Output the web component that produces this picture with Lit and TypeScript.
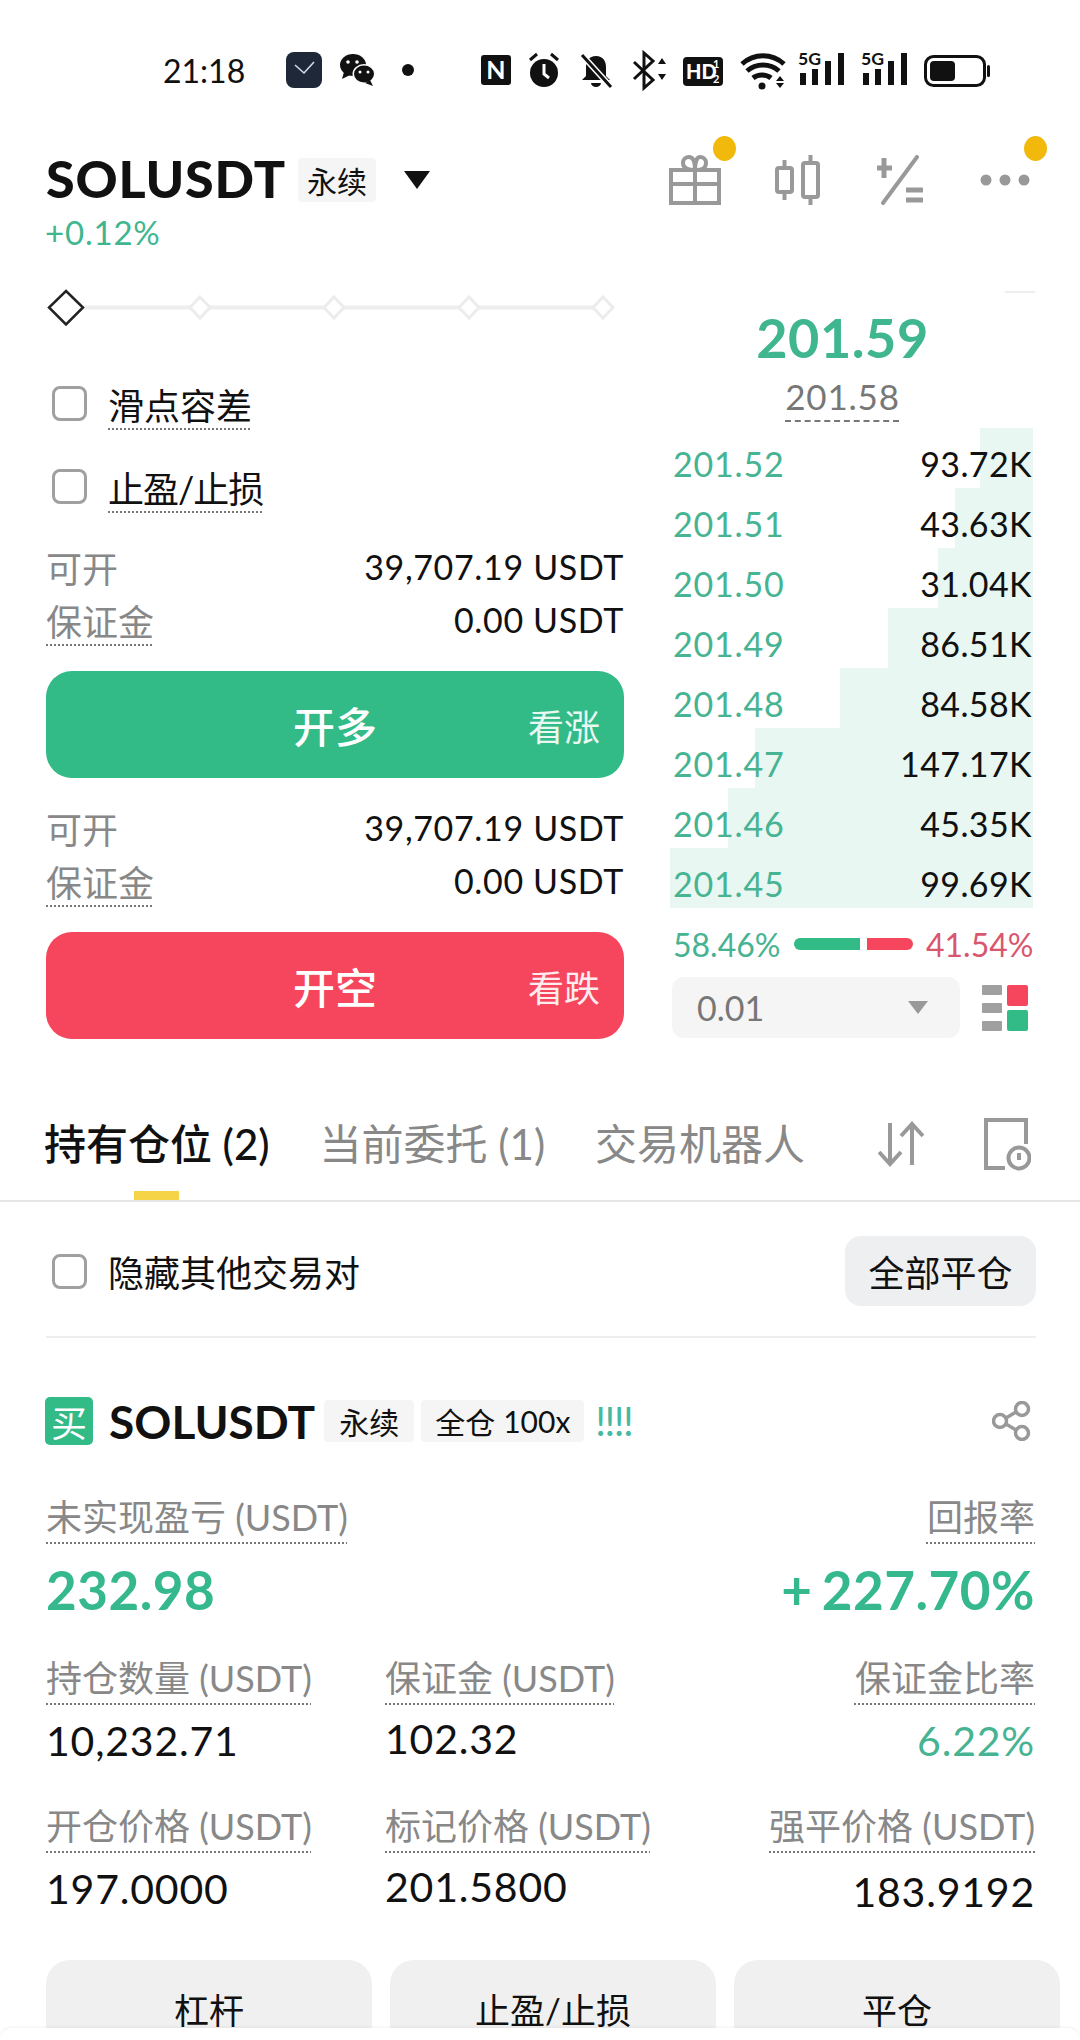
import { LitElement, html, svg, css } from 'lit';
import { customElement } from 'lit/decorators.js';

const book = [
  { price: '201.52', size: '93.72K', w: 53 },
  { price: '201.51', size: '43.63K', w: 78 },
  { price: '201.50', size: '31.04K', w: 95 },
  { price: '201.49', size: '86.51K', w: 145 },
  { price: '201.48', size: '84.58K', w: 193 },
  { price: '201.47', size: '147.17K', w: 278 },
  { price: '201.46', size: '45.35K', w: 305 },
  { price: '201.45', size: '99.69K', w: 363 },
];

const signal = (x: number) => svg`
  <g transform="translate(${x} 0)">
    <text x="0" y="15" font-size="17" font-weight="700" textLength="23" lengthAdjust="spacingAndGlyphs" fill="#111">5G</text>
    <rect x="2" y="23" width="6" height="12" fill="#111"/>
    <rect x="14" y="19" width="6" height="16" fill="#111"/>
    <rect x="27" y="11" width="6" height="24" fill="#111"/>
    <rect x="40" y="3" width="6" height="32" fill="#111"/>
  </g>`;

@customElement('app-root')
export class AppRoot extends LitElement {
  static styles = css`
    :host {
      display: block;
      position: relative;
      width: 1080px;
      height: 2040px;
      overflow: hidden;
      background: #fff;
      color: #111;
      font-family: Lato, 'Noto Sans CJK SC', sans-serif;
    }
    svg { display: block; flex: none; }
    .status {
      display: flex;
      align-items: center;
      height: 140px;
      padding-left: 163px;
    }
    .time { font-size: 32px; width: 80px; white-space: nowrap; }
    .status-left { margin-left: 43px; }
    .status-right { margin-left: 62px; }
    .head {
      display: flex;
      align-items: center;
      height: 80px;
      padding-left: 46px;
    }
    .symbol { margin-bottom: 5px; font-size: 52px; font-weight: 900; letter-spacing: 0.8px; }
    .tag {
      display: flex;
      align-items: center;
      background: #f5f5f5;
      font-size: 30px;
      padding: 0 9px;
      border-radius: 4px;
    }
    .head .tag { height: 44px; margin-left: 12px; }
    .caret { margin-left: 28px; }
    .head-icons {
      display: flex;
      align-items: center;
      gap: 55px;
      margin-left: auto;
      padding-right: 50px;
    }
    .candle { margin-left: -2px; }
    .icon-wrap { position: relative; }
    .badge {
      position: absolute;
      top: -18px;
      right: -15px;
      width: 23px;
      height: 25px;
      border-radius: 50%;
      background: #f0b90b;
    }
    .badge.more { top: -37px; right: -17px; }
    .change {
      height: 30px;
      margin-top: -3px;
      padding-left: 45px;
      font-size: 33px;
      line-height: 30px;
      letter-spacing: 0.8px;
      color: #3fb68f;
    }
    .main {
      display: flex;
      gap: 46px;
      height: 750px;
      margin-top: 41px;
      padding-left: 46px;
    }
    .left { width: 578px; }
    .check-row {
      display: flex;
      align-items: center;
      gap: 21px;
      height: 83px;
      padding-left: 6px;
      font-size: 36px;
    }
    .tight { letter-spacing: -1px; }
    .slider { margin: 1px 0 33px; }
    .box {
      width: 35px;
      height: 35px;
      box-sizing: border-box;
      border: 3px solid #a0a0a0;
      border-radius: 8px;
      flex: none;
    }
    .dot-line {
      text-decoration: underline dotted #777 2px;
      text-underline-offset: 9px;
      text-decoration-skip-ink: none;
    }
    .info { margin-top: 12px; }
    .info + .action { margin-top: 25px; }
    .action + .info { margin-top: 23px; }
    .info-row {
      display: flex;
      justify-content: space-between;
      align-items: center;
      height: 53px;
      font-size: 34px;
      letter-spacing: 0.65px;
    }
    .muted { color: #888; font-size: 36px; letter-spacing: 0; }
    .action {
      position: relative;
      display: flex;
      align-items: center;
      justify-content: center;
      height: 107px;
      border-radius: 26px;
      color: #fff;
      font-size: 42px;
      font-weight: 500;
    }
    .action.buy { background: #32bb87; }
    .action.sell { background: #f6465d; }
    .hint {
      position: absolute;
      right: 24px;
      font-size: 36px;
      font-weight: 400;
      opacity: 0.9;
    }
    .right { width: 365px; }
    .tick {
      width: 30px;
      height: 2px;
      margin: 3px 0 0 auto;
      background: #eee;
    }
    .last {
      margin-top: 15px;
      padding-right: 20px;
      text-align: center;
      font-size: 54px;
      line-height: 60px;
      letter-spacing: 0.5px;
      font-weight: 700;
      color: #3fb68f;
    }
    .mark {
      margin-top: 8px;
      padding-right: 20px;
      text-align: center;
      font-size: 35px;
      line-height: 40px;
      letter-spacing: 0.8px;
      color: #777;
    }
    .mark span {
      text-decoration: underline dashed #777 1.5px;
      text-underline-offset: 10px;
    }
    .book { margin-top: 12px; width: 363px; }
    .level {
      position: relative;
      display: flex;
      justify-content: space-between;
      height: 60px;
      box-sizing: border-box;
      padding: 16px 1px 0 3px;
      font-size: 34px;
      line-height: 40px;
      letter-spacing: 0.4px;
    }
    .level i {
      position: absolute;
      top: 0;
      right: 0;
      bottom: 0;
      background: #e8f7f2;
    }
    .level span { position: relative; }
    .level .price { color: #46b392; letter-spacing: 0.8px; }
    .ratio {
      display: flex;
      align-items: center;
      height: 32px;
      margin-top: 20px;
      padding-left: 3px;
      font-size: 32px;
      width: 365px;
      box-sizing: border-box;
    }
    .ratio .up { color: #46b392; width: 121px; white-space: nowrap; }
    .ratio .down { color: #d9566f; margin-left: 13px; white-space: nowrap; }
    .long, .short { height: 12px; flex: none; }
    .long { width: 66px; margin-right: 7px; background: #32bb87; border-radius: 6px 0 0 6px; }
    .short { width: 46px; background: #f6465d; border-radius: 0 6px 6px 0; }
    .depth {
      display: flex;
      align-items: center;
      margin-top: 17px;
      padding-left: 2px;
    }
    .select {
      display: flex;
      align-items: center;
      justify-content: space-between;
      box-sizing: border-box;
      width: 288px;
      height: 61px;
      padding: 0 32px 0 25px;
      border-radius: 12px;
      background: #f5f5f5;
      color: #777;
      font-size: 34px;
    }
    .depth svg.layout { margin-left: 22px; }
    .tabs {
      position: relative;
      display: flex;
      align-items: center;
      gap: 50px;
      margin-top: 62px;
      padding: 0 0 18px 44px;
      box-sizing: border-box;
      border-bottom: 2px solid #e6e6e6;
      height: 102px;
      font-size: 42px;
      color: #888;
      white-space: nowrap;
    }
    .tabs .active { color: #111; font-weight: 500; }
    .tabs .bar {
      position: absolute;
      left: 134px;
      bottom: 0;
      width: 45px;
      height: 9px;
      background: #f6d447;
    }
    .tab-icons {
      display: flex;
      align-items: center;
      gap: 59px;
      position: absolute;
      left: 878px;
      top: 17px;
    }
    .filter {
      display: flex;
      align-items: center;
      margin: 0 44px 0 46px;
      padding: 34px 0 30px 6px;
      border-bottom: 2px solid #eee;
      font-size: 36px;
    }
    .filter .box { margin-right: 21px; }
    .close-all {
      display: flex;
      align-items: center;
      justify-content: center;
      width: 191px;
      height: 70px;
      margin-left: auto;
      border-radius: 16px;
      background: #eeeff1;
    }
    .pos-head {
      display: flex;
      align-items: center;
      height: 48px;
      margin-top: 59px;
      padding: 0 48px 0 45px;
    }
    .buy-badge {
      display: flex;
      align-items: center;
      justify-content: center;
      width: 48px;
      height: 48px;
      border-radius: 5px;
      background: #32bb87;
      color: #fff;
      font-size: 36px;
    }
    .pos-symbol { margin: 0 9px 0 16px; font-size: 46px; font-weight: 700; }
    .pos-head .tag { height: 42px; margin-right: 7px; padding: 0 15px; }
    .pos-head .tag.wide { padding: 0 14px; gap: 8px; }
    .warn { margin-left: 4px; color: #46b9a0; font-size: 40px; letter-spacing: -1.5px; }
    .share { margin-left: auto; }
    .stats {
      display: grid;
      grid-template-columns: 339px 1fr auto;
      grid-template-rows: 161px 148px 118px;
      margin-top: 47px;
      padding: 0 45px 0 46px;
    }
    .stat { display: flex; flex-direction: column; align-items: flex-start; }
    .stat.end { align-items: flex-end; }
    .stat-label {
      height: 50px;
      font-size: 36px;
      line-height: 50px;
      color: #888;
      white-space: nowrap;
      text-underline-offset: 11px;
    }
    .stat-value { margin-top: 8px; font-size: 41px; line-height: 60px; letter-spacing: 0.8px; white-space: nowrap; }
    .stat-value.big { margin-top: 18px; font-size: 53px; letter-spacing: 0.5px; word-spacing: -4px; font-weight: 700; color: #35b88e; }
    .stat-value.green { color: #46b392; }
    .nudge-up { margin-top: 6px; }
    .nudge-down { margin-top: 11px; }
    .actions {
      display: flex;
      gap: 18px;
      margin-top: 41px;
      padding-left: 46px;
    }
    .actions div {
      display: flex;
      align-items: center;
      justify-content: center;
      width: 326px;
      height: 96px;
      border-radius: 24px;
      background: #f0f0f0;
      font-size: 35px;
    }
    .sheet {
      position: absolute;
      left: 0;
      right: 0;
      bottom: 0;
      height: 12px;
      border-radius: 16px 16px 0 0;
      background: #fff;
      box-shadow: 0 -1px 3px rgba(0, 0, 0, 0.06);
    }
  `;

  private _statusLeft() {
    return html`<svg class="status-left" width="133" height="36" viewBox="0 0 133 36">
      <rect x="0" y="0" width="36" height="36" rx="8" fill="#1e2838"/>
      <path d="M9 13l9 8 10-11" fill="none" stroke="#d5dbe5" stroke-width="1.6"/>
      <ellipse cx="67" cy="13" rx="13" ry="11" fill="#111"/>
      <path d="M58 20l-2 7 8-4z" fill="#111"/>
      <ellipse cx="78" cy="22" rx="11.500" ry="10" fill="#fff"/>
      <ellipse cx="78" cy="22" rx="10" ry="8.500" fill="#111"/>
      <path d="M84 28l3 6-8-3z" fill="#111"/>
      <circle cx="62" cy="10" r="1.800" fill="#fff"/><circle cx="71" cy="10" r="1.800" fill="#fff"/>
      <circle cx="74" cy="20" r="1.500" fill="#fff"/><circle cx="82" cy="20" r="1.500" fill="#fff"/>
      <circle cx="122" cy="18" r="6" fill="#111"/>
    </svg>`;
  }

  private _statusRight() {
    return html`<svg class="status-right" width="512" height="52" viewBox="0 -6 512 52">
      <rect x="0" y="5" width="30" height="30" rx="3" fill="#111"/>
      <text x="15" y="29" text-anchor="middle" font-size="25" font-weight="700" fill="#fff">N</text>
      <circle cx="63" cy="23" r="14" fill="#111"/>
      <path d="M49 10l7-6M77 10l-7-6" stroke="#111" stroke-width="3"/>
      <path d="M63 14v10l5 4" fill="none" stroke="#fff" stroke-width="3"/>
      <path d="M115 6c-7 0-10 5-10 11v9l-4 4h28l-4-4v-9c0-6-3-11-10-11z" fill="#111"/>
      <path d="M110 33h10a5 4 0 0 1-10 0z" fill="#111"/>
      <path d="M101 5l29 32" stroke="#fff" stroke-width="6"/>
      <path d="M101 5l29 32" stroke="#111" stroke-width="3"/>
      <path d="M153 12l19 18-9 8V3l9 8-19 18" fill="none" stroke="#111" stroke-width="3"/>
      <path d="M177 14l4-6 4 6zM177 24l4 6 4-6z" fill="#111"/>
      <rect x="202" y="7" width="40" height="29" rx="4" fill="#111"/>
      <text x="205" y="29" font-size="20" font-weight="900" fill="#fff">HD</text>
      <text x="232" y="18" font-size="11" font-weight="700" fill="#fff">1</text>
      <text x="232" y="33" font-size="11" font-weight="700" fill="#fff">2</text>
      <path d="M261 14c12-11 30-11 42 0M266 21c9-8 23-8 32 0M272 28c5-4 13-4 18 0" fill="none" stroke="#111" stroke-width="5"/>
      <circle cx="281" cy="36" r="3.500" fill="#111"/>
      <path d="M295 31l4-5 4 5zM295 33l4 5 4-5z" fill="#111"/>
      ${signal(317)}
      ${signal(380)}
      <rect x="444.500" y="6.500" width="59" height="29" rx="8" fill="none" stroke="#111" stroke-width="3"/>
      <rect x="449" y="11" width="25" height="20" rx="4" fill="#111"/>
      <rect x="506" y="15" width="3" height="12" rx="1.500" fill="#111"/>
    </svg>`;
  }

  private _headIcons() {
    return html`<div class="head-icons">
      <div class="icon-wrap">
        <svg width="52" height="52" viewBox="0 0 52 52" fill="none" stroke="#999" stroke-width="4">
          <path d="M2 16h48v33H2zM2 30h48M26 16v33"/>
          <path d="M26 16c-8 0-12-2-12-7 0-4 3-6 6-6 4 0 6 5 6 13zM26 16c8 0 11-2 11-7 0-4-3-6-6-6-3 0-5 5-5 13z"/>
        </svg>
        <span class="badge"></span>
      </div>
      <svg class="candle" width="48" height="50" viewBox="0 0 48 50" fill="none" stroke="#999" stroke-width="4">
        <rect x="3" y="13" width="15" height="24" rx="2"/><path d="M10.500 5v8M10.500 37v8"/>
        <rect x="29" y="8" width="15" height="34" rx="2"/><path d="M36.500 0v8M36.500 42v8"/>
      </svg>
      <svg width="48" height="50" viewBox="0 0 48 50" fill="none" stroke="#999" stroke-width="4">
        <path d="M7 3v20M0 13h15" stroke-width="5"/>
        <path d="M40 2L6 48" stroke-linecap="round"/>
        <path d="M29 35h17M29 45h17" stroke-width="5"/>
      </svg>
      <div class="icon-wrap">
        <svg width="50" height="14" viewBox="0 0 50 14" fill="#999">
          <circle cx="6" cy="7" r="5.500"/><circle cx="25" cy="7" r="5.500"/><circle cx="44" cy="7" r="5.500"/>
        </svg>
        <span class="badge more"></span>
      </div>
    </div>`;
  }

  private _slider() {
    const stops = [154, 288, 423, 557];
    return html`<svg class="slider" width="578" height="40" viewBox="0 0 578 40">
      <path d="M30 18.500H557" stroke="#eeeeee" stroke-width="4"/>
      ${stops.map(
        (x) => svg`<path d="M${x} 8l10 10.500-10 10.500-10-10.500z" fill="#fff" stroke="#ececec" stroke-width="3"/>`
      )}
      <path d="M20 2l17 16.500-17 17-17-17z" fill="#fff" stroke="#222" stroke-width="2.500"/>
    </svg>`;
  }

  private _info() {
    return html`<div class="info">
      <div class="info-row"><span class="muted">可开</span><span>39,707.19 USDT</span></div>
      <div class="info-row"><span class="muted dot-line">保证金</span><span>0.00 USDT</span></div>
    </div>`;
  }

  private _stat(label: string, value: string, cls = '', end = false) {
    return html`<div class="stat ${end ? 'end' : ''}">
      <span class="stat-label dot-line">${label}</span>
      <span class="stat-value ${cls}">${value}</span>
    </div>`;
  }

  render() {
    return html`
      <div class="status">
        <span class="time">21:18</span>
        ${this._statusLeft()} ${this._statusRight()}
      </div>
      <div class="head">
        <span class="symbol">SOLUSDT</span>
        <span class="tag">永续</span>
        <svg class="caret" width="26" height="18" viewBox="0 0 26 18"><path d="M0 0h26L13 18z" fill="#111"/></svg>
        ${this._headIcons()}
      </div>
      <div class="change">+0.12%</div>

      <div class="main">
        <div class="left">
          ${this._slider()}
          <div class="check-row"><span class="box"></span><span class="dot-line">滑点容差</span></div>
          <div class="check-row"><span class="box"></span><span class="dot-line tight">止盈/止损</span></div>
          ${this._info()}
          <div class="action buy">开多<span class="hint">看涨</span></div>
          ${this._info()}
          <div class="action sell">开空<span class="hint">看跌</span></div>
        </div>
        <div class="right">
          <div class="tick"></div>
          <div class="last">201.59</div>
          <div class="mark"><span>201.58</span></div>
          <div class="book">
            ${book.map(
              (row) => html`<div class="level">
                <i style="width:${row.w}px"></i>
                <span class="price">${row.price}</span>
                <span>${row.size}</span>
              </div>`
            )}
          </div>
          <div class="ratio">
            <span class="up">58.46%</span>
            <span class="long"></span><span class="short"></span>
            <span class="down">41.54%</span>
          </div>
          <div class="depth">
            <div class="select">
              <span>0.01</span>
              <svg width="20" height="13" viewBox="0 0 20 13"><path d="M0 0h20L10 13z" fill="#999"/></svg>
            </div>
            <svg class="layout" width="46" height="46" viewBox="0 0 46 46">
              <rect x="0" y="0" width="20" height="10" rx="1" fill="#a0a0a0"/>
              <rect x="0" y="18" width="20" height="10" rx="1" fill="#a0a0a0"/>
              <rect x="0" y="36" width="20" height="10" rx="1" fill="#a0a0a0"/>
              <rect x="25" y="0" width="21" height="21" rx="2" fill="#f6465d"/>
              <rect x="25" y="25" width="21" height="21" rx="2" fill="#32bb87"/>
            </svg>
          </div>
        </div>
      </div>

      <div class="tabs">
        <span class="active">持有仓位 (2)</span>
        <span>当前委托 (1)</span>
        <span>交易机器人</span>
        <span class="bar"></span>
        <div class="tab-icons">
          <svg width="46" height="46" viewBox="0 0 46 46" fill="none" stroke="#999" stroke-width="4">
            <path d="M13 2v40M2 31l11 12 11-12" transform="translate(-1 0)"/>
            <path d="M33 44V4M22 15L33 3l11 12" transform="translate(1 0)"/>
          </svg>
          <svg width="48" height="54" viewBox="0 0 48 54" fill="none" stroke="#999" stroke-width="4">
            <path d="M22 51H3V3h40v24"/>
            <circle cx="36" cy="41" r="10.500"/>
            <path d="M36 36v7"/>
          </svg>
        </div>
      </div>

      <div class="filter">
        <span class="box"></span>
        <span>隐藏其他交易对</span>
        <span class="close-all">全部平仓</span>
      </div>

      <div class="pos-head">
        <span class="buy-badge">买</span>
        <span class="pos-symbol">SOLUSDT</span>
        <span class="tag">永续</span>
        <span class="tag wide"><span>全仓</span><span>100x</span></span>
        <span class="warn">!!!!</span>
        <svg class="share" width="40" height="40" viewBox="0 0 40 40" fill="none" stroke="#999" stroke-width="3.500">
          <circle cx="30" cy="8" r="6.500"/><circle cx="8" cy="20" r="6.500"/><circle cx="30" cy="32" r="6.500"/>
          <path d="M14 17l10-6M14 23l10 6"/>
        </svg>
      </div>

      <div class="stats">
        ${this._stat('未实现盈亏 (USDT)', '232.98', 'big')}
        <div></div>
        ${this._stat('回报率', '+ 227.70%', 'big', true)}
        ${this._stat('持仓数量 (USDT)', '10,232.71')}
        ${this._stat('保证金 (USDT)', '102.32', 'nudge-up')}
        ${this._stat('保证金比率', '6.22%', 'green', true)}
        ${this._stat('开仓价格 (USDT)', '197.0000')}
        ${this._stat('标记价格 (USDT)', '201.5800', 'nudge-up')}
        ${this._stat('强平价格 (USDT)', '183.9192', 'nudge-down', true)}
      </div>

      <div class="actions">
        <div>杠杆</div>
        <div>止盈/止损</div>
        <div>平仓</div>
      </div>
      <div class="sheet"></div>
    `;
  }
}
